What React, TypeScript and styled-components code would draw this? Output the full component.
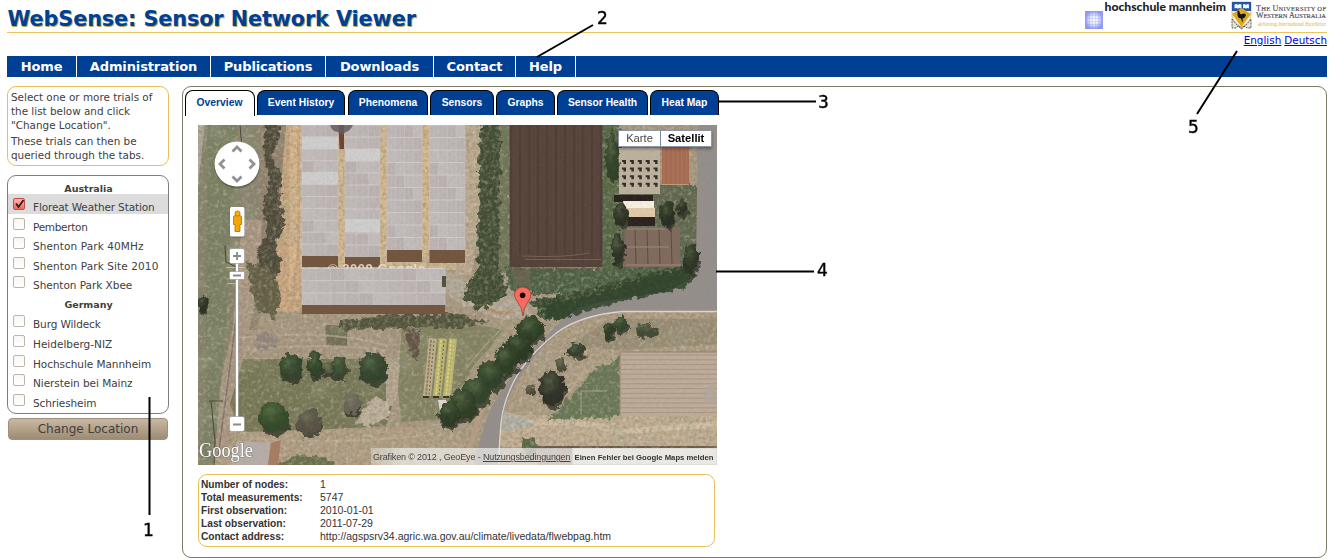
import React from "react";
import styled, { createGlobalStyle } from "styled-components";

const GlobalStyle = createGlobalStyle`
  * { box-sizing: border-box; }
  body { margin: 0; background: #fff; }
`;

const verdana = `"DejaVu Sans", sans-serif`;
const arial = `"Liberation Sans", sans-serif`;

const Page = styled.div`
  position: relative;
  width: 1337px;
  height: 560px;
  padding: 0 10px 0 7px;
  overflow: hidden;
  font-family: ${verdana};
  color: #404040;
  background: #fff;
`;
const Header = styled.header`
  display: flex;
  justify-content: space-between;
  height: 33px;
  border-bottom: 1px solid #ecc45c;
`;
const Title = styled.h1`
  margin: 6px 0 0 0.5px;
  font-size: 20.8px;
  line-height: 27px;
  letter-spacing: -0.12px;
  color: #004094;
  text-shadow: 1px 1px 0 #b9ab62;
  white-space: nowrap;
`;
const Languages = styled.div`
  display: flex;
  justify-content: flex-end;
  gap: 3px;
  height: 23px;
  font-size: 10.4px;
  line-height: 15px;
`;
const LanguageLink = styled.a`
  color: #0000dd;
  text-decoration: underline;
`;
const Nav = styled.nav`
  display: flex;
  height: 21px;
  background: #004094;
`;
const NavItem = styled.a<{ $w: number }>`
  width: ${(p) => p.$w}px;
  border-right: 1px solid #fff;
  color: #fff;
  font-size: 13px;
  font-weight: bold;
  letter-spacing: -0.12px;
  line-height: 21px;
  text-align: center;
  white-space: nowrap;
`;
const Body = styled.div`
  display: flex;
  gap: 13px;
  padding-top: 9px;
`;
const Sidebar = styled.aside`
  width: 162px;
  display: flex;
  flex-direction: column;
`;
const Hint = styled.div`
  height: 80px;
  margin-bottom: 9px;
  padding: 3px;
  border: 1px solid #e8bf56;
  border-radius: 9px;
  font-size: 10.4px;
  line-height: 14px;
  white-space: nowrap;
`;
const HintText = styled.p`
  margin: 0 0 2px;
`;
const TrialBox = styled.div`
  height: 239px;
  border: 1px solid #827c76;
  border-radius: 9px;
`;
const Country = styled.div<{ $h: number }>`
  height: ${(p) => p.$h}px;
  padding: 6px 0 0 1px;
  font-size: 9.5px;
  font-weight: bold;
  line-height: 13px;
  text-align: center;
`;
const Trial = styled.label<{ $on?: boolean }>`
  display: flex;
  gap: 8px;
  height: 19.6px;
  padding: 4px 0 0 5px;
  background: ${(p) => (p.$on ? "#dcdcdc" : "transparent")};
  font-size: 10.5px;
  white-space: nowrap;
`;
const Check = styled.span<{ $on?: boolean }>`
  display: block;
  width: 12px;
  height: 12px;
  border: 1px solid ${(p) => (p.$on ? "#c44b43" : "#bdb5a8")};
  border-radius: 2px;
  background: ${(p) => (p.$on ? "linear-gradient(#ffb7ae, #f0685c)" : "linear-gradient(#f8f7f5, #fff)")};
  svg { display: block; overflow: visible; }
`;
const TrialName = styled.span<{ $spacing: number }>`
  padding-top: 2px;
  line-height: 14px;
  letter-spacing: ${(p) => p.$spacing}px;
`;
const ChangeButton = styled.button`
  height: 22px;
  margin: 4px 1px 0 1px;
  padding: 0;
  border: 1px solid #a08f7c;
  border-radius: 4px;
  background: linear-gradient(#c8b9a6, #b3a18a 50%, #9e8b73);
  color: #404040;
  font: 12px/19px ${verdana};
`;
const Main = styled.main`
  width: 1145px;
  height: 472px;
  padding: 3px 0 0 2px;
  border: 1px solid #7f7a66;
  border-radius: 9px;
`;
const Tabs = styled.div`
  display: flex;
  height: 35px;
`;
const Tab = styled.a<{ $w: number; $gap: number; $on?: boolean }>`
  width: ${(p) => p.$w}px;
  height: ${(p) => (p.$on ? 26 : 25)}px;
  margin-right: ${(p) => p.$gap}px;
  padding-right: ${(p) => (p.$on ? 1 : 0)}px;
  border: 1px solid #000;
  border-bottom: 0;
  border-radius: 8px 8px 0 0;
  background: ${(p) => (p.$on ? "#fff" : "#004094")};
  color: ${(p) => (p.$on ? "#004094" : "#fff")};
  font: bold 10.3px/24px ${arial};
  text-align: center;
  white-space: nowrap;
`;
const Content = styled.section`
  width: 519px;
  margin-left: 13px;
`;
const MapPane = styled.div`
  position: relative;
  width: 519px;
  height: 340px;
  overflow: hidden;
  > svg { display: block; }
`;
const MapTypes = styled.div`
  position: absolute;
  top: 5px;
  left: 420px;
  display: flex;
  border: 1px solid #8a95a8;
  background: #fff;
  box-shadow: 0 2px 3px rgba(0, 0, 0, 0.35);
`;
const MapType = styled.span<{ $w: number; $on?: boolean }>`
  width: ${(p) => p.$w}px;
  height: 15px;
  border-left: ${(p) => (p.$on ? "1px solid #7389b0" : "0")};
  font: ${(p) => (p.$on ? "bold" : "normal")} 11.2px/15px ${arial};
  color: ${(p) => (p.$on ? "#000" : "#444")};
  text-align: center;
`;
const Credits = styled.div`
  position: absolute;
  right: 0;
  bottom: 0;
  display: flex;
  height: 17px;
  white-space: nowrap;
`;
const Copyright = styled.span`
  width: 201px;
  padding-left: 2px;
  background: linear-gradient(90deg, rgba(245, 245, 245, 0.35), rgba(245, 245, 245, 0.65) 30px);
  font: 9px/18px ${arial};
  letter-spacing: -0.14px;
  color: #444;
`;
const Report = styled.span`
  width: 145px;
  padding-right: 1px;
  border: 1px solid #ddd;
  background: rgba(248, 248, 246, 0.86);
  font: bold 7.7px/17px ${arial};
  color: #333;
  text-align: center;
`;
const Info = styled.dl`
  display: grid;
  grid-template-columns: 119px 1fr;
  grid-auto-rows: 13px;
  width: 517px;
  height: 73px;
  margin: 9px 0 0;
  padding: 3px 0 0 2px;
  border: 1px solid #e8bf56;
  border-radius: 9px;
  font: 10.5px/13px ${arial};
  color: #333;
`;
const Label = styled.dt`
  font-size: 10.2px;
  font-weight: bold;
`;
const Value = styled.dd`
  margin: 0;
`;
const Logos = styled.svg`
  display: block;
  width: 243px;
  height: 32px;
  overflow: visible;
`;
const Callouts = styled.svg`
  position: absolute;
  inset: 0;
  pointer-events: none;
`;

const range = (n: number) => Array.from({ length: n }, (_, i) => i);

function HeaderLogos() {
  return (
    <Logos viewBox="1084 0 243 32">
      <defs>
        <radialGradient id="sq">
          <stop offset="0" stopColor="#fff" />
          <stop offset=".5" stopColor="#e3e7fd" />
          <stop offset="1" stopColor="#939bf0" />
        </radialGradient>
      </defs>
      <rect x="1085" y="11" width="18" height="18" fill="url(#sq)" />
      {range(6).map((i) => (
        <path key={i} d={`M${1086.5 + i * 3} 11v18M1085 ${12.5 + i * 3}h18`} stroke="#8f95ee" strokeWidth=".6" opacity=".45" />
      ))}
      <text x="1104.5" y="11.4" fontFamily="Lato, sans-serif" fontWeight="900" fontSize="11.8" fill="#222" textLength="121.5" lengthAdjust="spacingAndGlyphs">hochschule mannheim</text>
      <path d="M1232 2h19v12c0 7-4 10-9.500 13c-5.500-3-9.500-6-9.500-13z" fill="#f8f5df" stroke="#b5a35c" strokeWidth=".6" />
      <path d="M1232 2h19v9h-19z" fill="#2455a4" />
      <path d="M1234.500 4.500q2-1 3.500 .5q1.500-1.500 3.500-.5v4q-2-1-3.500 .3q-1.500-1.300-3.500-.3zM1243 4.500q2-1 3 .5q1.500-1.500 3-.5v4q-2-1-3 .3q-1.500-1.300-3-.3z" fill="#f4f6fa" />
      <path d="M1232 14l9.500-6l9.500 6l-9.500 13z" fill="#dca920" />
      <path d="M1237.500 11q1.500-1.500 2 .8q0 3.200 2.500 2.200q3.500-1.500 4 1.500q-1 2.500-3.500 3l.5 3h-1l-1-3q-4-.5-3.500-4.500z" fill="#15151a" />
      <path d="M1232 19l4 5 5.500 4 5.500-4 4-5v9h-4l-2-2-3.500 3-3.500-3-2 2h-4z" fill="#e6e4da" stroke="#33332f" strokeWidth=".8" strokeDasharray="2 1" />
      <g fontFamily="Liberation Serif, serif" fill="#4a4a4a" stroke="#4a4a4a" strokeWidth=".15">
        <text x="1256" y="10.500" fontSize="6.500" textLength="70"><tspan fontSize="8">T</tspan>HE <tspan fontSize="8">U</tspan>NIVERSITY OF</text>
        <text x="1256" y="18" fontSize="6.500" textLength="70"><tspan fontSize="8">W</tspan>ESTERN <tspan fontSize="8">A</tspan>USTRALIA</text>
      </g>
      <text x="1258" y="26" fontFamily="Liberation Serif, serif" fontStyle="italic" fontSize="5.500" fill="#e0ab2c" textLength="68" lengthAdjust="spacingAndGlyphs">Achieving International Excellence</text>
    </Logos>
  );
}

type Tree = [number, number, number, number, string];
const trees: Tree[] = [
  [291, 367, 12, 13, "#34482d"], [315, 365, 8, 13, "#304327"], [339, 367, 8, 11, "#3d4d31"], [328, 368, 5, 6, "#5f6549"],
  [373, 368, 14, 15, "#33482f"], [274, 417, 15, 15, "#36502a"], [309, 422, 12, 12, "#655a4e"], [352, 404, 8, 10, "#7d7166"],
  [203, 303, 6, 9, "#2c2f20"], [552, 388, 13, 17, "#2d2e26"], [576, 350, 9, 7, "#35402d"],
  [608, 330, 6, 8, "#2c3d25"], [620, 324, 7, 7, "#34482b"], [531, 329, 14, 12, "#2c4023"], [519, 347, 14, 13, "#26381f"],
  [506, 360, 12, 13, "#2c3e22"], [491, 375, 14, 14, "#2f4226"], [476, 391, 14, 14, "#31472a"], [463, 404, 14, 15, "#2e4024"],
  [449, 414, 11, 12, "#2c3c24"], [646, 329, 11, 5, "#4c5239"], [691, 258, 8, 13, "#2d3023"], [682, 207, 5, 8, "#2b3122"],
  [667, 214, 7, 12, "#262a1e"], [621, 214, 7, 12, "#2c2d22"], [618, 248, 6, 16, "#2d2e24"], [612, 155, 6, 26, "#35452a"],
  [530, 388, 4, 4, "#66604e"], [561, 363, 5, 5, "#5e5a48"],
];

function Ground() {
  return (
    <g>
      <rect x="198" y="125" width="519" height="340" fill="#a6947d" />
      <path d="M198 125h55l-2 120-12 60-15 60-17 100h-9z" fill="#817e65" />
      <path d="M208 125h28l-8 170-14 170h-10z" fill="#757b5c" />
      <path d="M198 125h7l-7 60z" fill="#aaa395" />
      <path d="M239 125h49l-4 145-5 60h-45l10-110z" fill="#8d7d69" />
      <path d="M240 125h20v100h-18z" fill="#85806a" />
      <path d="M242 220h20l-2 60-22 100-10 85h-14l18-130z" fill="#a9937f" />
      <path d="M236 320l-19 145" stroke="#796d60" strokeWidth="1.500" />
      <path d="M286 125h16v190l-45 12 18-60 6-80z" fill="#c9a37c" />
      <path d="M290 125h7v130l-8 40z" fill="#d6b187" />
      <path d="M300 125h166v145h-166z" fill="#d2b48c" />
      <path d="M465 125h20l-2 80-12 70h-15z" fill="#baa68d" />
      <path d="M261 312l200-4 25 20-15 60-40 93h-212l24-100z" fill="#a5937c" />
      <path d="M243 359h143l10 34-10 33-145 8-11-30z" fill="#70714f" />
      <path d="M402 322l46-4 55 12-34 45-30 45-38 2-3-35z" fill="#7e7d5b" />
      <path d="M325 325h22v22h-20z" fill="#6b684c" />
      <path d="M240 432l210-6 34 39h-272z" fill="#af9a80" />
      <path d="M386 355l14 10-4 40-10 2z" fill="#b3a28b" />
      <path d="M238 338q90-10 150 8M245 350q80-8 140 0M246 438q90 8 190-4" fill="none" stroke="#bba98f" strokeWidth="2" opacity=".7" />
      <path d="M465 370q15-20 40-45M470 372q14-20 40-42" fill="none" stroke="#a09678" strokeWidth="1.500" />
      <path d="M443 270l22 8 25 15 30 5 14 18-30 4-40-14-20-14z" fill="#b1a594" />
      <path d="M478 300q16 18 35 11" fill="none" stroke="#b58a61" strokeWidth="3" />
      <path d="M495 465l7-80 50-58 70-15h95v153z" fill="#ab9880" />
      <path d="M570 345l40-26h107v25l-100 6z" fill="#968970" />
      <path d="M500 415h217v32h-217z" fill="#bfaa8f" />
      <path d="M504 428q60-14 115 4l98-8" stroke="#cdb99e" strokeWidth="6" fill="none" />
      <path d="M500 410q20 4 35 16l-32 6z" fill="#b1aea5" />
      <path d="M534 446h183v3h-183z" fill="#66503f" />
      <path d="M538 449h179v16h-179z" fill="#917a6b" />
    </g>
  );
}

function Greenhouse({ x, y, w, h, rows, cols, base }: { x: number; y: number; w: number; h: number; rows: number; cols: number; base: number }) {
  return (
    <g>
      <rect x={x} y={y + h} width={w} height={base} fill="#6e5039" />
      <rect x={x} y={y} width={w} height={h} fill="#b9b1b0" />
      {range(rows * cols).map((i) => {
        const r = Math.floor(i / cols);
        const c = i % cols;
        const shade = ["#bcb4b3", "#b8afae", "#bdb7b6", "#bab2b1", "#bfb9b8"][(r * 7 + c * 3) % 5];
        return <rect key={i} x={x + (c * w) / cols} y={y + (r * h) / rows} width={w / cols} height={h / rows} fill={shade} />;
      })}
      {range(rows).map((i) => (
        <path key={i} d={`M${x} ${y + (i * h) / rows}h${w}`} stroke="#d3cfcd" strokeWidth=".8" />
      ))}
      {range(cols * 2 + 1).map((i) => (
        <path key={i} d={`M${x + (i * w) / cols / 2} ${y}v${h}`} stroke="#cbc5c3" strokeWidth={i % 2 ? 0.3 : 0.6} />
      ))}
    </g>
  );
}

function Road() {
  return (
    <g>
      <path d="M698 125h19v187h-95q-40 4-62 20q-20 15-35 38q-18 24-24 52q-2 22-2 43h-25q4-20 14-50q12-26 38-56q22-28 48-48q20-10 54-13l40-7 22-12 6-20z" fill="#918b88" />
      <path d="M717 311.500h-95q-42 4-65 21q-22 17-37 38q-16 26-19 52q-2 20-2 42" fill="none" stroke="#ddd5c8" strokeWidth="1.300" />
      <path d="M494 385q-14 24-20 48l-8 30" fill="none" stroke="#b29a82" strokeWidth="5" />
    </g>
  );
}

function Aerial() {
  return (
    <svg width="519" height="340" viewBox="198 125 519 340">
      <defs>
        <filter id="rough" x="-10%" y="-10%" width="120%" height="120%">
          <feTurbulence type="fractalNoise" baseFrequency=".16" numOctaves="3" seed="4" result="n" />
          <feDisplacementMap in="SourceGraphic" in2="n" scale="10" xChannelSelector="R" yChannelSelector="G" />
        </filter>
        <filter id="grain" x="0" y="0" width="100%" height="100%">
          <feTurbulence type="fractalNoise" baseFrequency=".3" numOctaves="4" seed="9" />
          <feColorMatrix values="0 0 0 0 .2  0 0 0 0 .19  0 0 0 0 .11  1.8 1.8 0 0 -1.55" />
        </filter>
        <filter id="glint" x="0" y="0" width="100%" height="100%">
          <feTurbulence type="fractalNoise" baseFrequency=".26" numOctaves="4" seed="31" />
          <feColorMatrix values="0 0 0 0 .86  0 0 0 0 .8  0 0 0 0 .7  1.8 1.8 0 0 -1.75" />
        </filter>
        <filter id="patches" x="0" y="0" width="100%" height="100%">
          <feTurbulence type="fractalNoise" baseFrequency=".04" numOctaves="4" seed="12" />
          <feColorMatrix values="0 0 0 0 .36  0 0 0 0 .37  0 0 0 0 .24  2.500 2.500 0 0 -2.500" />
        </filter>
        <radialGradient id="crown" cx=".4" cy=".3">
          <stop offset="0" stopColor="#78915a" stopOpacity=".4" />
          <stop offset="1" stopColor="#0d160a" stopOpacity=".22" />
        </radialGradient>
      </defs>
      <Ground />
      <rect x="198" y="125" width="519" height="340" filter="url(#patches)" opacity=".28" />
      <g filter="url(#rough)">
        <path d="M480 120h21v80l-2 70 10 20-10 10-20 10-18-12 8-16 8-12z" fill="#37452a" />
        <path d="M500 120h11v152h-12z" fill="#69704f" />
        <path d="M602 120h17l3 30-3 50 6 70-25 2z" fill="#4e5f3b" />
        <path d="M618 184h80v90h-80z" fill="#596047" />
        <path d="M505 268h125l30-4v16l-60 14h-62l-28-4z" fill="#45593a" />
        <path d="M530 300l50-8 60-18 50-10 12 8-16 14-62 14-50 18-30 2z" fill="#2f4226" />
        <path d="M266 120l13 0 0 20-8 16 12 22-4 24 6 20-10 26 6 14-4 18-16-8-4-20 10-16-4-26 6-30-6-26z" fill="#464230" />
        <path d="M246 262l22 4 14 30-8 24-18-12-6-20z" fill="#5c593e" />
        <path d="M340 322l50-8h60l40 8-30 5-50 1-70 2z" fill="#4c4d36" />
        <path d="M372 398l18 2-2 18-20 8-12-4z" fill="#bbad98" />
        <path d="M404 329l16 2 0 14-4 20-7-16z" fill="#5d4c40" />
        <path d="M254 338l12-6 12 4-2 10-16 4z" fill="#8f8378" />
        <path d="M280 462l20-8 30 6 8 10h-60z" fill="#626b45" />
        <path d="M522 438l14 2v18l-10 4z" fill="#56603f" />
      </g>
      <g filter="url(#rough)">
        <path d="M548 420l26-27 33-36h13v60z" fill="#62714f" />
        <path d="M566 392l22-22 28-14" fill="none" stroke="#b3a087" strokeWidth="5" />
      </g>
      <rect x="198" y="125" width="519" height="340" filter="url(#grain)" opacity=".34" />
      <rect x="198" y="125" width="519" height="340" filter="url(#glint)" opacity=".3" />

      <Road />
      <g filter="url(#rough)">
        <path d="M545 306l46-10 50-16 46-12 10 6-14 14-62 14-50 14-24 5z" fill="#2b3c23" opacity=".85" />
      </g>

      <rect x="509.500" y="125" width="93" height="142" fill="#4f3b32" />
      {range(31).map((i) => (
        <path key={i} d={`M${511 + i * 3} 126v${136 - (i % 4) * 3}`} stroke={i % 3 ? "#5e4a3f" : "#42312c"} strokeWidth="1" opacity=".6" />
      ))}
      <path d="M523 256q40 2 66-3M525 259.500h76M509 268h93" fill="none" stroke="#6f5a4d" strokeWidth="1" />
      <path d="M513 270h17v16h-17z" fill="#675f4a" opacity=".8" />

      <path d="M619 148h41v46h-41z" fill="#bbae9c" />
      {range(20).map((i) => (
        <path key={i} d={`M${622 + (i % 5) * 7.9} ${160 + Math.floor(i / 5) * 7.6}h4v4h-2.500v-2h-1.500z`} fill="#2f251f" />
      ))}
      <rect x="662" y="147" width="27" height="37" fill="#a3664c" />
      {range(6).map((i) => <path key={i} d={`M${664 + i * 4.5} 147v37`} stroke="#ac7055" strokeWidth="1" />)}
      <path d="M662 184.500h27" stroke="#bb9a75" />
      <path d="M614 195h39v7h-39zM628 217h27v9h-27z" fill="#241a16" />
      <path d="M623 201h31v8h-29z" fill="#f6eedd" />
      <path d="M625 208h30v9h-26z" fill="#dfc8a6" />
      <path d="M625 227h55v40h-57z" fill="#7b6558" />
      {range(4).map((i) => <path key={i} d={`M${635 + i * 12} 229l1 35`} stroke="#4c3b33" strokeWidth=".8" />)}
      <path d="M627 247h42M626 265h55M627 229h46" stroke="#9b8677" />

      <path d="M620 352h97v64h-97z" fill="#bca997" />
      {range(13).map((i) => <path key={i} d={`M621 ${355 + i * 4.8}h96`} stroke="#a08b78" strokeWidth=".8" />)}
      <path d="M620 416v-64h97" fill="none" stroke="#917a69" />
      <path d="M581 414v-23h26" fill="none" stroke="#a1a284" />
      <path d="M702 392l12-10 3 20-10 2z" fill="#aea59a" opacity=".7" />

      <Greenhouse x={302} y={125} w={36} h={131} rows={11} cols={3} base={11} />
      <Greenhouse x={345} y={125} w={35} h={132} rows={11} cols={3} base={10} />
      <Greenhouse x={387} y={125} w={35} h={125} rows={10} cols={4} base={12} />
      <Greenhouse x={429.500} y={125} w={35.500} h={125} rows={10} cols={4} base={13} />
      <path d="M302 137h36v12h-36zM302 172h36v12h-36zM345 149h35v12h-35zM345 219h35v13h-35z" fill="#cdcccc" />
      <path d="M338.500 125h5.500v24h-4.500z" fill="#633e31" />
      <path d="M330 125h23q-3 6-7 7l-4 3-4-3q-6 0-8-7z" fill="#5f575d" opacity=".85" />
      <text x="328" y="273" fontFamily="Liberation Sans, sans-serif" fontWeight="700" fontSize="13" fill="#f4ead9" opacity=".8" textLength="97">© 2009 Google</text>
      <Greenhouse x={302} y={268.500} w={143} h={36.500} rows={3} cols={10} base={9} />
      <path d="M442 276h4v11h-4z" fill="#4c4a38" />

      {[0, 1, 2].map((i) => (
        <g key={i}>
          <path d={`M${429 + i * 10} 338l8 1-6 57h-8z`} fill={i === 0 ? "#bcac89" : "#b9b16f"} />
          <path d={`M${431 + i * 10} 340l-5 56`} stroke={i ? "#d6d077" : "#8f7b5e"} strokeWidth="1.800" strokeDasharray="3 1" />
          <path d={`M${434 + i * 10} 341l-5 54`} stroke={i === 2 ? "#d6d077" : "#6d5b43"} strokeWidth="1" strokeDasharray="2 2" />
          <path d={`M${423 + i * 10} 397h6`} stroke="#38291e" strokeWidth="2" />
        </g>
      ))}
      <path d="M438 400l8 0 2 6-8 6z" fill="#dcd8d0" />
      <g filter="url(#rough)">
        {trees.map(([x, y, rx, ry, c], i) => (
          <g key={i}>
            <ellipse cx={x + 1} cy={y + 4} rx={rx} ry={ry} fill="#23261b" opacity=".75" />
            <ellipse cx={x} cy={y} rx={rx} ry={ry} fill={c} />
            <ellipse cx={x} cy={y} rx={rx} ry={ry} fill="url(#crown)" />
          </g>
        ))}
      </g>
      <path d="M237 441l34 2-3 22h-37z" fill="#b3aaa6" />
      <path d="M271 443l10-3-3 25h-10z" fill="#a3785d" />
      <path d="M240 125l2 24M225 246l1 16 10 5M211 401l4 40-1 24M209 401h14" fill="none" stroke="#423d31" />
      <rect x="198" y="125" width="519" height="340" filter="url(#grain)" opacity=".08" />
      <rect x="198" y="125" width="519" height="340" fill="#fff" opacity=".04" />

      <MapControls />
    </svg>
  );
}

function MapControls() {
  return (
    <g>
      <circle cx="237" cy="165.500" r="23" fill="#000" opacity=".25" />
      <circle cx="237" cy="164" r="22.500" fill="#fff" />
      <path d="M232.500 151.500l4.500-4.500 4.500 4.500M232.500 176.500l4.500 4.500 4.500-4.500M224.500 159.500l-4.500 4.500 4.500 4.500M249.500 159.500l4.500 4.500-4.500 4.500" fill="none" stroke="#929292" strokeWidth="2.800" />
      <rect x="229.500" y="207" width="15.500" height="31" rx="2" fill="#555" opacity=".45" />
      <rect x="230" y="207" width="14.500" height="29.500" rx="1.500" fill="#fff" />
      <path d="M233.500 217q0-1.500 2-1.500h4q2 0 2 1.500v7.500h-1.500v7h-5v-7h-1.500z" fill="#f5a400" stroke="#b76d00" strokeWidth=".8" />
      <circle cx="237.500" cy="213.500" r="2.600" fill="#f9ad0a" stroke="#b76d00" strokeWidth=".8" />
      <path d="M226 267.500h19M227 283.500h11" stroke="#eee" strokeWidth=".7" opacity=".7" />
      <path d="M237 262v156" stroke="#777" strokeWidth="4" opacity=".6" />
      <path d="M237 262v156" stroke="#fff" strokeWidth="2.500" />
      <g fill="#fff" stroke="#777" strokeOpacity=".45">
        <rect x="229.500" y="248.500" width="15" height="15" rx="2" />
        <rect x="229.500" y="271.500" width="15" height="8" rx="1" />
        <rect x="229.500" y="416.500" width="15" height="15" rx="2" />
      </g>
      <path d="M233 256h8M237 252v8M233 275.500h8M233 424.500h8" stroke="#8a8a8a" strokeWidth="1.800" />
      <path d="M523 316q-.5-8-5-13.500q-3.500-4-3.500-8a8.200 7.500 0 0 1 16.400 0q0 4-3.500 8q-4 5.500-4.400 13.500z" fill="#f96b61" stroke="#a83a34" strokeWidth=".8" />
      <circle cx="522.600" cy="295.200" r="2.800" fill="#170403" />
      <text x="199" y="457" fontFamily="Liberation Serif, serif" fontSize="20" fill="#fff" stroke="#555" strokeWidth="1.200" strokeOpacity=".5" paintOrder="stroke" textLength="54" lengthAdjust="spacingAndGlyphs">Google</text>
    </g>
  );
}

const navItems: [string, number][] = [["Home", 70], ["Administration", 134], ["Publications", 115], ["Downloads", 108], ["Contact", 82], ["Help", 60]];
const tabs: [string, number, number][] = [["Overview", 70, 2], ["Event History", 88, 3], ["Phenomena", 80, 2], ["Sensors", 64, 2], ["Graphs", 59, 2], ["Sensor Health", 91, 2], ["Heat Map", 69, 0]];
const australia: [string, number][] = [["Floreat Weather Station", -0.14], ["Pemberton", -0.3], ["Shenton Park 40MHz", 0.1], ["Shenton Park Site 2010", 0.1], ["Shenton Park Xbee", -0.03]];
const germany: [string, number][] = [["Burg Wildeck", -0.1], ["Heidelberg-NIZ", 0], ["Hochschule Mannheim", -0.05], ["Nierstein bei Mainz", -0.05], ["Schriesheim", -0.1]];
const facts = [
  ["Number of nodes:", "1"],
  ["Total measurements:", "5747"],
  ["First observation:", "2010-01-01"],
  ["Last observation:", "2011-07-29"],
  ["Contact address:", "http://agspsrv34.agric.wa.gov.au/climate/livedata/flwebpag.htm"],
];

function TrialRow({ name, spacing, on }: { name: string; spacing: number; on?: boolean }) {
  return (
    <Trial $on={on}>
      <Check $on={on}>
        {on && (
          <svg width="10" height="10" viewBox="0 0 10 10">
            <path d="M2 4.500l2.500 3.500L9.500 1" fill="none" stroke="#331a18" strokeWidth="1.800" />
          </svg>
        )}
      </Check>
      <TrialName $spacing={spacing}>{name}</TrialName>
    </Trial>
  );
}

export default function App() {
  return (
    <Page>
      <GlobalStyle />
      <Header>
        <Title>WebSense: Sensor Network Viewer</Title>
        <HeaderLogos />
      </Header>
      <Languages>
        <LanguageLink>English</LanguageLink>
        <LanguageLink>Deutsch</LanguageLink>
      </Languages>
      <Nav>
        {navItems.map(([t, w]) => <NavItem key={t} $w={w}>{t}</NavItem>)}
      </Nav>
      <Body>
        <Sidebar>
          <Hint>
            <HintText>Select one or more trials of<br />the list below and click<br />"Change Location".</HintText>
            <HintText>These trials can then be<br />queried through the tabs.</HintText>
          </Hint>
          <TrialBox>
            <Country $h={18}>Australia</Country>
            {australia.map(([n, s], i) => <TrialRow key={n} name={n} spacing={s} on={i === 0} />)}
            <Country $h={19.4}>Germany</Country>
            {germany.map(([n, s]) => <TrialRow key={n} name={n} spacing={s} />)}
          </TrialBox>
          <ChangeButton>Change Location</ChangeButton>
        </Sidebar>
        <Main>
          <Tabs>
            {tabs.map(([t, w, g], i) => <Tab key={t} $w={w} $gap={g} $on={i === 0}>{t}</Tab>)}
          </Tabs>
          <Content>
            <MapPane>
              <Aerial />
              <MapTypes>
                <MapType $w={41}>Karte</MapType>
                <MapType $w={51} $on>Satellit</MapType>
              </MapTypes>
              <Credits>
                <Copyright>Grafiken © 2012 , GeoEye - <u>Nutzungsbedingungen</u></Copyright>
                <Report>Einen Fehler bei Google Maps melden</Report>
              </Credits>
            </MapPane>
            <Info>
              {facts.map(([k, v]) => (
                <React.Fragment key={k}>
                  <Label>{k}</Label>
                  <Value>{v}</Value>
                </React.Fragment>
              ))}
            </Info>
          </Content>
        </Main>
      </Body>
      <Callouts width="1337" height="560" viewBox="0 0 1337 560">
        <path d="M149.500 397v118M593 25l-56 32M718 101.500h98M716 271.500h98M1237 51l-40 63" stroke="#000" strokeWidth="2" fill="none" />
        <g fontFamily="DejaVu Sans, sans-serif" fontSize="17" fill="#000" stroke="#000" strokeWidth=".4">
          <text x="143" y="536">1</text>
          <text x="597" y="24">2</text>
          <text x="818" y="108">3</text>
          <text x="817" y="276">4</text>
          <text x="1188" y="133">5</text>
        </g>
      </Callouts>
    </Page>
  );
}
